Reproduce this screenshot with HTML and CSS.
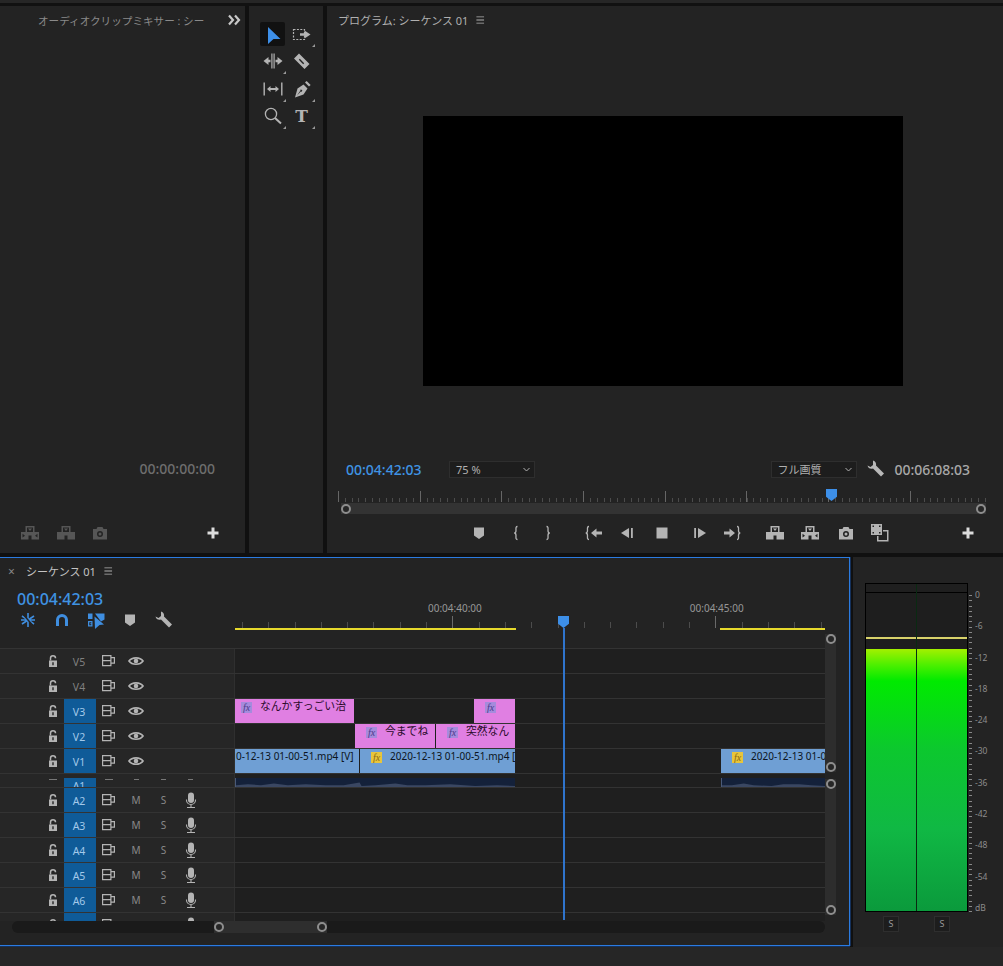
FILE: index.html
```html
<!DOCTYPE html>
<html lang="ja">
<head>
    <meta charset="UTF-8">
    <title>シーケンス 01</title>
    <link rel="stylesheet" href="styles.css">
</head>
<body>
    <!-- icon set -->
    <svg class="defs" aria-hidden="true">
        <symbol id="i-select" viewBox="0 0 20 20"><path d="M5 3L17.500 15 10.500 15 5 20Z"/></symbol>
        <symbol id="i-track" viewBox="0 0 20 20"><rect x="1.500" y="5.500" width="11" height="10" fill="none" stroke="currentColor" stroke-width="1.200" stroke-dasharray="2 1.400"/><path d="M8 9.200h4.500V6.500l6 4-6 4v-2.700H8z"/></symbol>
        <symbol id="i-ripple" viewBox="0 0 20 20"><path d="M0.500 10L5.500 6v2.800h2v2.400h-2V14zM19.500 10L14.500 6v2.800h-2v2.400h2V14z"/><rect x="8.300" y="2.500" width="1.200" height="15"/><rect x="10.500" y="2.500" width="1.200" height="15"/></symbol>
        <symbol id="i-razor" viewBox="0 0 20 20"><path fill-rule="evenodd" d="M7 2.500L17.500 13l-5 5L2 7.500zM7.800 7.800l-1 1 4.400 4.400 1-1z"/></symbol>
        <symbol id="i-slip" viewBox="0 0 20 20"><rect x="0.500" y="3.500" width="1.400" height="13"/><rect x="18.100" y="3.500" width="1.400" height="13"/><path d="M4 10l3.500-3v2h5V7l3.500 3-3.500 3v-2h-5v2z"/></symbol>
        <symbol id="i-pen" viewBox="0 0 20 20"><path fill-rule="evenodd" d="M3 18.500L5.500 9.500 11.500 5.500 15.500 9.500 11.500 15.500zM4.800 16.700l4-4.200 1 .2.500-1.800-1.800-.5-.2 1.300z"/><path d="M13 3.500l1.600-1.600 4 4L17 7.500z"/></symbol>
        <symbol id="i-zoom" viewBox="0 0 20 20"><circle cx="8" cy="8" r="5.600" fill="none" stroke="currentColor" stroke-width="1.300"/><path d="M12 12l6 5.500" stroke="currentColor" stroke-width="2" fill="none"/></symbol>
        <symbol id="i-marker" viewBox="0 0 20 20"><path d="M5 4.500h10v8L10 16l-5-3.500z"/></symbol>
        <symbol id="i-brace-l" viewBox="0 0 20 20"><path d="M11.500 3.500C9.500 3.500 10 5.500 10 7.500c0 1.500-.8 2.500-1.800 2.500 1 0 1.800 1 1.800 2.500 0 2-.5 4 1.500 4" fill="none" stroke="currentColor" stroke-width="1.300"/></symbol>
        <symbol id="i-brace-r" viewBox="0 0 20 20"><path d="M8.500 3.500c2 0 1.500 2 1.500 4 0 1.500.8 2.500 1.800 2.500-1 0-1.800 1-1.800 2.500 0 2 .5 4-1.500 4" fill="none" stroke="currentColor" stroke-width="1.300"/></symbol>
        <symbol id="i-goto-in" viewBox="0 0 20 20"><path d="M5 3.500C3 3.500 3.500 5.500 3.500 7.500 3.500 9 2.700 10 1.700 10c1 0 1.800 1 1.800 2.500 0 2-.5 4 1.500 4" fill="none" stroke="currentColor" stroke-width="1.300"/><path d="M7 10l5.500-4.500v3H18v3h-5.500v3z"/></symbol>
        <symbol id="i-goto-out" viewBox="0 0 20 20"><path d="M15 3.500c2 0 1.500 2 1.500 4 0 1.500.8 2.500 1.800 2.500-1 0-1.800 1-1.800 2.500 0 2 .5 4-1.500 4" fill="none" stroke="currentColor" stroke-width="1.300"/><path d="M13 10L7.500 5.500v3H2v3h5.500v3z"/></symbol>
        <symbol id="i-step-back" viewBox="0 0 20 20"><path d="M3 10l8-5v10z"/><rect x="13" y="5" width="1.800" height="10"/></symbol>
        <symbol id="i-step-fwd" viewBox="0 0 20 20"><path d="M17 10L9 5v10z"/><rect x="5.200" y="5" width="1.800" height="10"/></symbol>
        <symbol id="i-stop" viewBox="0 0 20 20"><rect x="4.500" y="4.500" width="11" height="11"/></symbol>
        <symbol id="i-lift" viewBox="0 0 20 20"><path fill-rule="evenodd" d="M5.500 3h9v6h4.500v7.500h-7.500V12.500h-3v4H1V9h4.500zM7 4.500V9h6V4.500zM8 5.500h4L10 8z"/></symbol>
        <symbol id="i-extract" viewBox="0 0 20 20"><path fill-rule="evenodd" d="M5.500 3h9v6h4.500v7.500h-7.500V12.500h-3v4H1V9h4.500zM7 4.500V9h6V4.500zM8 5.500h4L10 8zM2.500 10.800v3.700l2.500-1.800zM17.500 10.800v3.700l-2.500-1.800z"/></symbol>
        <symbol id="i-camera" viewBox="0 0 20 20"><path fill-rule="evenodd" d="M3 6h3.500l1-2h5l1 2H17v10.500H3zM10 8a3 3 0 1 0 0 6 3 3 0 0 0 0-6zM10 9.500a1.500 1.500 0 1 1 0 3 1.500 1.500 0 0 1 0-3z"/></symbol>
        <symbol id="i-compare" viewBox="0 0 20 20"><path fill-rule="evenodd" d="M1 1h11v11H1zM2.500 2.500V4H4V2.500zM2.500 9v1.500H4V9zM9 2.500V4h1.500V2.500zM9 9v1.500h1.500V9z"/><path d="M13 7h5.500v11.500H7V13h1.500v4H17V8.500h-4z"/></symbol>
        <symbol id="i-wrench" viewBox="0 0 20 20"><path d="M7 1.500L7 6 4.500 8 1.500 6.500C2 9 4.500 10.500 7 9.500L15 17.500 18 14.500 10 6.500C10.500 4.500 9.500 2 7 1.500Z"/></symbol>
        <symbol id="i-plus" viewBox="0 0 20 20"><path d="M8.500 4.500h3v4h4v3h-4v4h-3v-4h-4v-3h4z"/></symbol>
        <symbol id="i-menu" viewBox="0 0 20 20"><path d="M6 6h8.500v1H6zM6 9.500h8.500v1H6zM6 13h8.500v1H6z"/></symbol>
        <symbol id="i-more" viewBox="0 0 20 20"><path d="M4 5.500l4 4.500-4 4.500M10 5.500l4 4.500-4 4.500" fill="none" stroke="currentColor" stroke-width="2.200"/></symbol>
        <symbol id="i-down" viewBox="0 0 20 20"><path d="M6 8l4 4 4-4" fill="none" stroke="currentColor" stroke-width="1.300"/></symbol>
        <symbol id="i-snap" viewBox="0 0 20 20"><path d="M10 3v14M4 6l12 8M16 6L4 14M3 10h14" fill="none" stroke="currentColor" stroke-width="1.600"/><path d="M4 3L16.500 17.500" stroke="#232323" stroke-width="1.500"/></symbol>
        <symbol id="i-magnet" viewBox="0 0 20 20"><path d="M5.500 16v-6a4.500 4.500 0 0 1 9 0v6" fill="none" stroke="currentColor" stroke-width="3"/></symbol>
        <symbol id="i-linked" viewBox="0 0 20 20"><path fill-rule="evenodd" d="M2 3.500h4.500v5.500H2zM2 11h4.500v5.500H2zM3.300 12.300v3H5.300v-1H4.300v-1h1v-1z"/><path d="M9 3.500h9.500v6L15 11.500zM8.500 6.500L18 14.500 13.500 15 9 19z"/></symbol>
        <symbol id="i-lock" viewBox="0 0 20 20"><path fill-rule="evenodd" d="M6 9.500h8v6.500H6zM9.300 11.300v3h1.400v-3z"/><path d="M7.500 9.500V7.300a2.500 2.500 0 0 1 5 0" fill="none" stroke="currentColor" stroke-width="1.500"/></symbol>
        <symbol id="i-output" viewBox="0 0 20 20"><path d="M3.600 4.600h8.300v5H3.600zM3.600 9.600h8.300v5H3.600zM11.900 6.600h3.500v5.500h-3.500z" fill="none" stroke="currentColor" stroke-width="1.200"/></symbol>
        <symbol id="i-eye" viewBox="0 0 20 20"><path d="M3 10c3-4.300 11-4.300 14 0-3 4.300-11 4.300-14 0z" fill="none" stroke="currentColor" stroke-width="1.700"/><circle cx="10" cy="10" r="2.300"/></symbol>
        <symbol id="i-mic" viewBox="0 0 20 20"><rect x="7" y="2.500" width="6" height="10.500" rx="3"/><path d="M5.500 9.500V10a4.500 4.500 0 0 0 9 0v-.5M10 14.500v3M6 17.500h8" fill="none" stroke="currentColor" stroke-width="1.100"/></symbol>
    </svg>

    <div class="top-strip"></div>

    <div class="upper">
        <section class="panel mixer">
            <div class="mixer-head">
                <span class="mixer-title">オーディオクリップミキサー : シー</span>
                <svg class="ic more"><use href="#i-more"/></svg>
            </div>
            <div class="mixer-time">00:00:00:00</div>
            <div class="mixer-btns">
                <svg class="ic"><use href="#i-extract"/></svg>
                <svg class="ic"><use href="#i-lift"/></svg>
                <svg class="ic"><use href="#i-camera"/></svg>
                <span></span>
                <svg class="ic plus"><use href="#i-plus"/></svg>
            </div>
        </section>

        <section class="panel tools">
            <div class="tool-grid">
                <div class="tool active"><svg class="ic"><use href="#i-select"/></svg></div>
                <div class="tool corner"><svg class="ic"><use href="#i-track"/></svg></div>
                <div class="tool corner"><svg class="ic"><use href="#i-ripple"/></svg></div>
                <div class="tool"><svg class="ic"><use href="#i-razor"/></svg></div>
                <div class="tool corner"><svg class="ic"><use href="#i-slip"/></svg></div>
                <div class="tool corner"><svg class="ic"><use href="#i-pen"/></svg></div>
                <div class="tool corner"><svg class="ic"><use href="#i-zoom"/></svg></div>
                <div class="tool corner"><span class="tool-t">T</span></div>
            </div>
        </section>

        <section class="panel program">
            <div class="program-head">
                <span class="program-title">プログラム: シーケンス 01</span>
                <svg class="ic menu"><use href="#i-menu"/></svg>
            </div>
            <div class="video"></div>
            <div class="program-row">
                <span class="tc-blue">00:04:42:03</span>
                <div class="dropdown zoom-select"><span>75 %</span><svg class="ic"><use href="#i-down"/></svg></div>
                <div class="spacer"></div>
                <div class="dropdown"><span>フル画質</span><svg class="ic"><use href="#i-down"/></svg></div>
                <svg class="ic wrench"><use href="#i-wrench"/></svg>
                <span class="tc-total">00:06:08:03</span>
            </div>
            <div class="program-ruler">
                <div class="playhead-head program-head-mark"></div>
            </div>
            <div class="program-scroll">
                <span class="knob"></span>
                <span class="knob"></span>
            </div>
            <div class="transport">
                <svg class="ic"><use href="#i-marker"/></svg>
                <svg class="ic"><use href="#i-brace-l"/></svg>
                <svg class="ic"><use href="#i-brace-r"/></svg>
                <svg class="ic"><use href="#i-goto-in"/></svg>
                <svg class="ic"><use href="#i-step-back"/></svg>
                <svg class="ic"><use href="#i-stop"/></svg>
                <svg class="ic"><use href="#i-step-fwd"/></svg>
                <svg class="ic"><use href="#i-goto-out"/></svg>
                <svg class="ic"><use href="#i-lift"/></svg>
                <svg class="ic"><use href="#i-extract"/></svg>
                <svg class="ic"><use href="#i-camera"/></svg>
                <svg class="ic"><use href="#i-compare"/></svg>
                <svg class="ic plus"><use href="#i-plus"/></svg>
            </div>
        </section>
    </div>

    <div class="lower">
        <section class="timeline">
            <div class="tl-center">
                <div class="tl-head">
                    <div class="tl-controls">
                        <div class="tl-tab">
                            <span class="tab-close">×</span>
                            <span class="tab-name">シーケンス 01</span>
                            <svg class="ic menu"><use href="#i-menu"/></svg>
                        </div>
                        <div class="tl-time">00:04:42:03</div>
                        <div class="tl-tools">
                            <svg class="ic on"><use href="#i-snap"/></svg>
                            <svg class="ic on"><use href="#i-magnet"/></svg>
                            <svg class="ic on"><use href="#i-linked"/></svg>
                            <svg class="ic"><use href="#i-marker"/></svg>
                            <svg class="ic"><use href="#i-wrench"/></svg>
                        </div>
                    </div>
                    <div class="tl-ruler">
                        <div class="ruler-labels">
                            <span>00:04:40:00</span>
                            <span>00:04:45:00</span>
                        </div>
                        <div class="ruler-ticks"></div>
                        <div class="work-area">
                            <span class="work-a"></span>
                            <span class="work-b"></span>
                        </div>
                    </div>
                </div>

                <div class="tracks">
                    <div class="track">
                        <div class="track-head">
                            <svg class="ic lock"><use href="#i-lock"/></svg>
                            <span class="label">V5</span>
                            <svg class="ic"><use href="#i-output"/></svg>
                            <svg class="ic"><use href="#i-eye"/></svg>
                        </div>
                        <div class="lane"></div>
                    </div>
                    <div class="track">
                        <div class="track-head">
                            <svg class="ic lock"><use href="#i-lock"/></svg>
                            <span class="label">V4</span>
                            <svg class="ic"><use href="#i-output"/></svg>
                            <svg class="ic"><use href="#i-eye"/></svg>
                        </div>
                        <div class="lane"></div>
                    </div>
                    <div class="track">
                        <div class="track-head">
                            <svg class="ic lock"><use href="#i-lock"/></svg>
                            <span class="label blue">V3</span>
                            <svg class="ic"><use href="#i-output"/></svg>
                            <svg class="ic"><use href="#i-eye"/></svg>
                        </div>
                        <div class="lane">
                            <div class="clip title cut-left" style="left:0;width:119px"><i class="fx">fx</i><span>なんかすっごい治</span></div>
                            <div class="clip title" style="left:239px;width:41px"><i class="fx">fx</i></div>
                        </div>
                    </div>
                    <div class="track">
                        <div class="track-head">
                            <svg class="ic lock"><use href="#i-lock"/></svg>
                            <span class="label blue">V2</span>
                            <svg class="ic"><use href="#i-output"/></svg>
                            <svg class="ic"><use href="#i-eye"/></svg>
                        </div>
                        <div class="lane">
                            <div class="clip title" style="left:120px;width:80px"><i class="fx">fx</i><span>今までね</span></div>
                            <div class="clip title" style="left:201px;width:79px"><i class="fx">fx</i><span>突然なん</span></div>
                        </div>
                    </div>
                    <div class="track">
                        <div class="track-head">
                            <svg class="ic lock"><use href="#i-lock"/></svg>
                            <span class="label blue">V1</span>
                            <svg class="ic"><use href="#i-output"/></svg>
                            <svg class="ic"><use href="#i-eye"/></svg>
                        </div>
                        <div class="lane">
                            <div class="clip video-clip" style="left:0;width:124px"><span class="cut">0-12-13 01-00-51.mp4 [V]</span></div>
                            <div class="clip video-clip" style="left:125px;width:155px"><i class="fx">fx</i><span>2020-12-13 01-00-51.mp4 [</span></div>
                            <div class="clip video-clip" style="left:486px;width:104px"><i class="fx">fx</i><span>2020-12-13 01-0</span></div>
                        </div>
                    </div>
                    <div class="track a1">
                        <div class="track-head">
                            <span class="stub lock-stub"></span>
                            <span class="label blue">A1</span>
                            <span class="stub"></span>
                            <span class="stub short"></span>
                            <span class="stub short"></span>
                            <span class="stub short"></span>
                        </div>
                        <div class="lane">
                            <div class="audio" style="left:0;width:280px">
                                <svg viewBox="0 0 280 10" preserveAspectRatio="none"><path d="M0 10V8L12 7 25 8 38 6 52 8 70 7 90 8 108 8 124 5 126 9 140 8 160 6 172 8 190 8 215 7 240 9 262 8 280 9V10z"/></svg>
                            </div>
                            <div class="audio" style="left:486px;width:104px">
                                <svg viewBox="0 0 104 10" preserveAspectRatio="none"><path d="M0 10V8L10 8 22 6 32 8 50 9 62 7 78 7 90 8 104 9V10z"/></svg>
                            </div>
                        </div>
                    </div>
                    <div class="track">
                        <div class="track-head">
                            <svg class="ic lock"><use href="#i-lock"/></svg>
                            <span class="label blue">A2</span>
                            <svg class="ic"><use href="#i-output"/></svg>
                            <span class="ms">M</span>
                            <span class="ms">S</span>
                            <svg class="ic"><use href="#i-mic"/></svg>
                        </div>
                        <div class="lane"></div>
                    </div>
                    <div class="track">
                        <div class="track-head">
                            <svg class="ic lock"><use href="#i-lock"/></svg>
                            <span class="label blue">A3</span>
                            <svg class="ic"><use href="#i-output"/></svg>
                            <span class="ms">M</span>
                            <span class="ms">S</span>
                            <svg class="ic"><use href="#i-mic"/></svg>
                        </div>
                        <div class="lane"></div>
                    </div>
                    <div class="track">
                        <div class="track-head">
                            <svg class="ic lock"><use href="#i-lock"/></svg>
                            <span class="label blue">A4</span>
                            <svg class="ic"><use href="#i-output"/></svg>
                            <span class="ms">M</span>
                            <span class="ms">S</span>
                            <svg class="ic"><use href="#i-mic"/></svg>
                        </div>
                        <div class="lane"></div>
                    </div>
                    <div class="track">
                        <div class="track-head">
                            <svg class="ic lock"><use href="#i-lock"/></svg>
                            <span class="label blue">A5</span>
                            <svg class="ic"><use href="#i-output"/></svg>
                            <span class="ms">M</span>
                            <span class="ms">S</span>
                            <svg class="ic"><use href="#i-mic"/></svg>
                        </div>
                        <div class="lane"></div>
                    </div>
                    <div class="track">
                        <div class="track-head">
                            <svg class="ic lock"><use href="#i-lock"/></svg>
                            <span class="label blue">A6</span>
                            <svg class="ic"><use href="#i-output"/></svg>
                            <span class="ms">M</span>
                            <span class="ms">S</span>
                            <svg class="ic"><use href="#i-mic"/></svg>
                        </div>
                        <div class="lane"></div>
                    </div>
                    <div class="track">
                        <div class="track-head">
                            <svg class="ic lock"><use href="#i-lock"/></svg>
                            <span class="label blue"></span>
                            <svg class="ic"><use href="#i-output"/></svg>
                            <span class="ms"></span>
                            <span class="ms"></span>
                            <svg class="ic"><use href="#i-mic"/></svg>
                        </div>
                        <div class="lane"></div>
                    </div>
                </div>

                <div class="hscroll">
                    <div class="hscroll-thumb">
                        <span class="knob"></span>
                        <span class="knob"></span>
                    </div>
                </div>

                <div class="playhead">
                    <div class="playhead-head"></div>
                    <div class="playhead-line"></div>
                </div>
            </div>

            <div class="vscroll">
                <div class="vscroll-part first">
                    <span class="knob"></span>
                    <span class="knob"></span>
                </div>
                <div class="vscroll-part second">
                    <span class="knob"></span>
                    <span class="knob"></span>
                </div>
            </div>
        </section>

        <section class="panel meters">
            <div class="meter">
                <div class="meter-bars">
                    <div class="channel">
                        <div class="peak"></div>
                        <div class="hold"></div>
                        <div class="fill"></div>
                    </div>
                    <div class="channel">
                        <div class="peak"></div>
                        <div class="hold"></div>
                        <div class="fill"></div>
                    </div>
                </div>
                <div class="meter-scale">
                    <span>0</span><span>-6</span><span>-12</span><span>-18</span><span>-24</span><span>-30</span>
                    <span>-36</span><span>-42</span><span>-48</span><span>-54</span><span>dB</span>
                </div>
            </div>
            <div class="solo-row">
                <span class="solo">S</span>
                <span class="solo">S</span>
            </div>
        </section>
    </div>

    <div class="bottom-strip"></div>
</body>
</html>
```

FILE: styles.css
```css
* {
    box-sizing: border-box;
}
html, body {
    margin: 0;
    padding: 0;
}
body {
    width: 1003px;
    height: 966px;
    overflow: hidden;
    background: #101010;
    color: #999;
    font-family: "Noto Sans", "Noto Sans CJK JP", sans-serif;
    font-size: 11px;
}
.defs {
    display: none;
}
.ic {
    display: block;
    width: 20px;
    height: 20px;
    fill: currentColor;
    color: #b4b4b4;
    flex: none;
}
.spacer {
    flex: 1;
}
.panel {
    background: #232323;
}
.top-strip {
    height: 6px;
    background: linear-gradient(#262626 0 3px, #111 3px);
}
.upper {
    display: flex;
    gap: 4px;
    height: 547px;
}
.lower {
    display: flex;
    gap: 3px;
    height: 390px;
    margin-top: 4px;
}
.bottom-strip {
    height: 19px;
    background: #262626;
}
.knob {
    display: block;
    width: 10px;
    height: 10px;
    border: 2px solid #8e8e8e;
    border-radius: 50%;
    background: #262626;
    flex: none;
}

/* clip mixer */
.mixer {
    width: 245px;
    display: flex;
    flex-direction: column;
}
.mixer-head {
    display: flex;
    align-items: center;
    height: 28px;
    padding-left: 38px;
}
.mixer-title {
    width: 167px;
    white-space: nowrap;
    color: #8a8a8a;
    font-size: 10.6px;
}
.more {
    margin-left: 21px;
    color: #c8c8c8;
}
.mixer-time {
    margin-top: auto;
    height: 20px;
    line-height: 20px;
    padding-right: 30px;
    text-align: right;
    color: #6e6e6e;
    font-size: 14px;
    font-weight: 500;
}
.mixer-btns {
    display: grid;
    grid-template-columns: 36px 35px 34px 78px 36px;
    justify-items: center;
    align-items: center;
    height: 20px;
    margin: 44px 0 10px 12px;
}
.mixer-btns .ic {
    color: #565656;
}
.mixer-btns .plus {
    color: #dcdcdc;
}

/* tools */
.tools {
    width: 74px;
    padding: 14px 0 0 9px;
}
.tool-grid {
    display: grid;
    grid-template-columns: 29px 29px;
    grid-auto-rows: 27.5px;
}
.tool {
    position: relative;
    display: flex;
    align-items: center;
    justify-content: center;
}
.tool.active .ic {
    position: relative;
    color: #3d8fe8;
}
.tool.active::before {
    content: "";
    position: absolute;
    left: 2px;
    top: 2px;
    width: 25px;
    height: 24px;
    background: #111;
    border-radius: 2px;
}
.tool.corner::after {
    content: "";
    position: absolute;
    right: 1px;
    bottom: 1px;
    border-style: solid;
    border-width: 0 0 3px 3px;
    border-color: transparent transparent #999 transparent;
}
.tool-t {
    color: #b4b4b4;
    font-family: "DejaVu Serif", serif;
    font-size: 17px;
    font-weight: bold;
    line-height: 20px;
}

/* program monitor */
.program {
    flex: 1;
}
.program-head {
    display: flex;
    align-items: center;
    height: 28px;
    padding-left: 11px;
}
.program-title {
    color: #b0b0b0;
    font-size: 11px;
}
.menu {
    margin-left: 3px;
    width: 18px;
    height: 18px;
}
.video {
    width: 480px;
    height: 270px;
    margin: 82px 0 0 96px;
    background: #000;
}
.program-row {
    display: flex;
    align-items: center;
    height: 32px;
    margin-top: 67px;
    padding: 0 33px 0 19px;
}
.tc-blue {
    width: 103px;
    color: #3f93e3;
    font-size: 14px;
    font-weight: 500;
}
.tc-total {
    margin-left: 9px;
    color: #a8a8a8;
    font-size: 14px;
    font-weight: 500;
}
.dropdown {
    display: flex;
    align-items: center;
    justify-content: space-between;
    width: 86px;
    height: 17px;
    padding-left: 6px;
    border: 1px solid #2e2e2e;
    background: #1d1d1d;
    color: #b0b0b0;
    font-size: 11px;
}
.dropdown .ic {
    width: 15px;
    height: 15px;
}
.wrench {
    margin-left: 9px;
    color: #b8b8b8;
}
.program-ruler {
    position: relative;
    height: 17px;
    margin-left: 11px;
    width: 650px;
    background:
        repeating-linear-gradient(90deg, #666 0 1px, transparent 1px 81.7px) 0 bottom / 100% 11px no-repeat,
        repeating-linear-gradient(90deg, #4c4c4c 0 1px, transparent 1px 6.81px) 0 bottom / 100% 4px no-repeat;
}
.playhead-head {
    width: 11px;
    height: 12px;
    background: #3d8fe8;
    clip-path: polygon(0 0, 100% 0, 100% 65%, 50% 100%, 0 65%);
}
.program-head-mark {
    position: absolute;
    left: 488px;
    top: 4px;
}
.program-scroll {
    display: flex;
    justify-content: space-between;
    align-items: center;
    width: 645px;
    height: 11px;
    margin: 1px 0 0 14px;
    background: #333;
}
.transport {
    display: grid;
    grid-template-columns: 37px 32px 46px 34px 34px 37px 33px 43px 35px 36px 34px 88px 20px;
    align-items: center;
    height: 20px;
    margin: 9px 0 0 142px;
}
.transport .plus {
    color: #dcdcdc;
}

/* timeline */
.timeline {
    display: flex;
    width: 850px;
    height: 389px;
    border: 1px solid #2b7be0;
    border-left: 0;
    background: #232323;
    box-shadow: 0 1px 0 #14305a, 1px 0 0 #14305a;
}
.tl-center {
    position: relative;
    width: 825px;
}
.tl-head {
    display: flex;
    height: 90px;
}
.tl-controls {
    width: 235px;
}
.tl-tab {
    display: flex;
    align-items: center;
    height: 26px;
    padding-left: 8px;
}
.tab-close {
    width: 18px;
    color: #888;
    font-size: 12px;
}
.tab-name {
    color: #c4c4c4;
    font-size: 11px;
}
.tl-time {
    height: 22px;
    margin-top: 4px;
    padding-left: 17px;
    line-height: 22px;
    color: #3f93e3;
    font-size: 16px;
    font-weight: 500;
}
.tl-tools {
    display: flex;
    gap: 14px;
    height: 20px;
    padding-left: 18px;
}
.tl-tools .ic.on {
    color: #3f8ee0;
}
.tl-ruler {
    flex: 1;
    padding-top: 44px;
}
.ruler-labels {
    display: flex;
    height: 12px;
    margin-left: 193px;
    gap: 208px;
    line-height: 12px;
    color: #979797;
    font-size: 10px;
}
.ruler-ticks {
    height: 14px;
    background:
        repeating-linear-gradient(90deg, #6a6a6a 0 1px, transparent 1px 263px) 217px bottom / 100% 12px no-repeat,
        repeating-linear-gradient(90deg, #4c4c4c 0 1px, transparent 1px 26.3px) 7px bottom / 100% 6px no-repeat;
}
.work-area {
    display: flex;
    justify-content: space-between;
    height: 2px;
}
.work-a,
.work-b {
    background: #e6d92c;
}
.work-a {
    width: 281px;
}
.work-b {
    width: 105px;
}
.tracks {
    height: 273px;
    overflow: hidden;
    border-top: 1px solid #333;
}
.track {
    display: flex;
    height: 25px;
    border-bottom: 1px solid #333;
}
.track-head {
    display: grid;
    grid-template-columns: 64px 32px 26px 28px 27px 27px;
    justify-items: center;
    align-items: center;
    width: 235px;
    background: #262626;
    border-right: 1px solid #2f2f2f;
}
.track-head .lock {
    justify-self: end;
    margin-right: 1px;
}
.label {
    display: flex;
    align-items: center;
    justify-content: center;
    width: 100%;
    height: 24px;
    padding: 1px 2px 0 0;
    color: #808080;
    font-size: 10.5px;
}
.label.blue {
    background: #0f5b98;
    color: #a3c9ea;
}
.ms {
    color: #8a8a8a;
    font-size: 10px;
}
.lane {
    position: relative;
    flex: 1;
    background: #1f1f1f;
}
.clip {
    position: absolute;
    top: 0;
    height: 24px;
    display: flex;
    overflow: hidden;
    white-space: nowrap;
    line-height: 14px;
}
.clip.title {
    background: #e07fe2;
    padding-left: 11px;
    color: #2a0a2a;
    font-size: 10.8px;
}
.clip.title span {
    margin-left: 8px;
}
.clip.title.cut-left {
    padding-left: 6px;
}
.clip.video-clip {
    background: #6f9fd4;
    color: #0c1420;
    padding-left: 11px;
    font-size: 10px;
}
.clip.video-clip span {
    margin-left: 8px;
}
.clip.video-clip .cut {
    margin-left: -10px;
}
.fx {
    flex: none;
    width: 11px;
    height: 11px;
    margin-top: 3px;
    background: #a58bdc;
    color: #4b3a8a;
    font-family: "Liberation Serif", serif;
    font-size: 10px;
    line-height: 11px;
    text-align: center;
}
.video-clip .fx {
    background: #e8c53c;
    color: #8a6a10;
}
.track.a1 {
    height: 14px;
    overflow: hidden;
}
.a1 .track-head {
    align-items: start;
}
.a1 .label {
    height: 10px;
    margin-top: 4px;
    align-items: flex-start;
    padding-top: 2px;
    overflow: hidden;
    line-height: 12px;
}
.stub {
    width: 8px;
    height: 1px;
    margin-top: 5px;
    background: #777;
}
.stub.short {
    width: 5px;
}
.lock-stub {
    justify-self: end;
    margin-right: 7px;
}
.audio {
    position: absolute;
    top: 4px;
    height: 9px;
    background: #14213a;
    border-left: 1px solid #4a5a78;
}
.audio svg {
    display: block;
    width: 100%;
    height: 100%;
    fill: #3a4762;
}
.playhead {
    position: absolute;
    left: 558px;
    top: 58px;
    width: 11px;
    display: flex;
    flex-direction: column;
    align-items: center;
}
.playhead-line {
    width: 2px;
    height: 292px;
    background: #2f74cc;
}
.hscroll {
    height: 12px;
    margin-left: 12px;
    background: #1a1a1a;
    border-radius: 6px;
}
.hscroll-thumb {
    display: flex;
    justify-content: space-between;
    align-items: center;
    width: 113px;
    height: 12px;
    margin-left: 202px;
    background: #2e2e2e;
}
.vscroll {
    width: 11px;
    flex: none;
}
.vscroll-part {
    display: flex;
    flex-direction: column;
    justify-content: space-between;
    align-items: center;
    background: #2d2d2d;
}
.vscroll-part.first {
    height: 138px;
    margin-top: 76px;
}
.vscroll-part.second {
    height: 136px;
    margin-top: 7px;
}

/* audio meters */
.meters {
    flex: 1;
    height: 390px;
    padding: 26px 0 0 12px;
}
.meter {
    display: flex;
    height: 329px;
}
.meter-bars {
    display: flex;
    gap: 1px;
    width: 103px;
    border: 1px solid #000;
    background: #0a2a12;
}
.channel {
    flex: 1;
    display: flex;
    flex-direction: column;
}
.peak {
    height: 9px;
    background: #1f1f1f;
    border-bottom: 1px solid #000;
}
.hold {
    height: 56px;
    background: linear-gradient(#1e1e1e 0 44px, #d8d26a 44px 46px, #1e1e1e 46px);
}
.fill {
    flex: 1;
    background: linear-gradient(#a4f000 0, #4cf000 16px, #00ea00 32px, #0cc82e 100px, #10b844 180px, #0b9a3c 100%);
}
.meter-scale {
    display: flex;
    flex-direction: column;
    justify-content: space-between;
    height: 323px;
    margin-top: 7px;
    padding-left: 7px;
    color: #8c8c8c;
    font-size: 8.5px;
    line-height: 10px;
    background: repeating-linear-gradient(#888 0 1px, transparent 1px 5.27px) 1px 5px / 3px 100% no-repeat;
}
.solo-row {
    display: flex;
    gap: 35px;
    margin: 4px 0 0 18px;
}
.solo {
    width: 16px;
    height: 16px;
    border: 1px solid #2e2e2e;
    background: #1d1d1d;
    color: #999;
    font-size: 9px;
    line-height: 14px;
    text-align: center;
}
```
